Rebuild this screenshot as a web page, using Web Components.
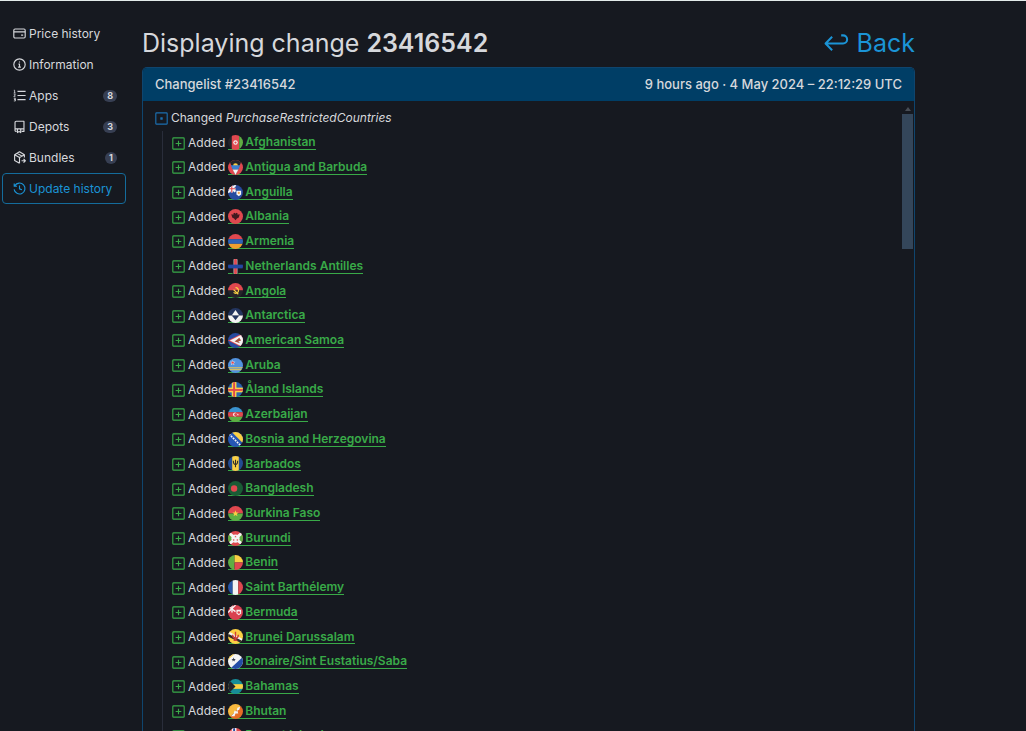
<!DOCTYPE html>
<html lang="en">
<head>
<meta charset="utf-8">
<title>Changelist #23416542</title>
<style>
  :root {
    --bg: #161920;
    --text: #d6d8dc;
    --blue: #1b94d6;
    --header: #003e66;
    --line: #0f456e;
    --green: #39aa48;
  }
  body {
    margin: 0;
    height: 100vh;
    overflow: hidden;
    background: var(--bg);
    color: var(--text);
    font-family: Inter, "Liberation Sans", sans-serif;
  }
</style>
</head>
<body>
<history-page>
  <side-nav slot="nav">
    <nav-item icon="card">Price history</nav-item>
    <nav-item icon="info">Information</nav-item>
    <nav-item icon="list" count="8">Apps</nav-item>
    <nav-item icon="depot" count="3">Depots</nav-item>
    <nav-item icon="bundle" count="1">Bundles</nav-item>
    <nav-item icon="history" active>Update history</nav-item>
  </side-nav>
  <page-title>Displaying change <b style="font-weight: 600">23416542</b></page-title>
  <change-panel>
    <span slot="title">Changelist #23416542</span>
    <span slot="time">9 hours ago · 4 May 2024 – 22:12:29 UTC</span>
    <change-group name="PurchaseRestrictedCountries"></change-group>
  </change-panel>
</history-page>

<script>
const ICONS = {
  card: '<rect x="1" y="2.5" width="14" height="11" rx="1.5"/><path d="M1 6h14M10 10h2.5"/>',
  info: '<circle cx="8" cy="8" r="7"/><path d="M6.7 7.5H8v3.7M6.3 11.3h3.4M8 4.4v1"/>',
  list: '<path d="M5.5 3h10M5.5 8h10M5.5 13h10"/><path d="M1 1.5h1v3.5M.8 5h2.4M1 7h2L1 9.5h2M1 11.5h2V13H1.5 3v1.7H1" stroke-width="1"/>',
  depot: '<path d="M4.5 14H3.500a1 1 0 0 1-1-1V3a1.500 1.500 0 0 1 1.500-1.500h9.500V14h-3M2.500 11h11"/><path d="M5.500 11v4.500L7.500 14l2 1.500V11"/>',
  bundle: '<path d="M8 15 2 11.600V4.500L8 1l6 3.500V8M2 4.500 8 8l6-3.500M8 8v7M5 2.800l6 3.500"/><path d="M10.500 12H15M13 9.800l2.200 2.200L13 14.200"/>',
  history: '<path d="M2.300 4.500A6.700 6.700 0 1 1 1.400 9M1.500 1.800v3.400h3.400M8 4.300v4.200l3 1"/>',
  back: '<path d="M5.200 3.700 1 8l4.200 4.300M1 8h11.200a2.600 2.600 0 0 0 2.600-2.600v0A2.600 2.600 0 0 0 12.200 2.800H11"/>',
  changed: '<rect x="1" y="1" width="14" height="14" rx="1"/><path d="M6.500 8h3M8 6.500v3" stroke-width="2.500"/>',
  added: '<rect x="1" y="1" width="14" height="14" rx="1"/><path d="M4.500 8h7M8 4.500v7"/>'
};

// round flags, 16x16 box
const R = '#e0484f', B = '#274b9f', W = '#f4f4f4', Y = '#fbd044', G = '#5fae43';
const rect = (x, y, w, h, c) => `<rect x="${x}" y="${y}" width="${w}" height="${h}" fill="${c}"/>`;
const poly = (pts, c) => `<polygon points="${pts}" fill="${c}"/>`;
const dot = (x, y, r, c) => `<circle cx="${x}" cy="${y}" r="${r}" fill="${c}"/>`;
const all = c => rect(0, 0, 16, 16, c);
const jack = `<path d="M0 1l8 6M8 0L0 8" stroke="${W}" stroke-width="2.4"/><path d="M4 0v8M0 4h8" stroke="${W}" stroke-width="2.4"/><path d="M4 0v8M0 4h8" stroke="${R}" stroke-width="1.2"/>`;
const star = (x, y, r, c) => {
  const pts = [];
  for (let i = 0; i < 10; i++) {
    const a = Math.PI * (i / 5 - 0.5), d = i % 2 ? r * 0.42 : r;
    pts.push((x + d * Math.cos(a)).toFixed(1) + ',' + (y + d * Math.sin(a)).toFixed(1));
  }
  return poly(pts.join(' '), c);
};

const FLAGS = {
  af: rect(0, 0, 4, 16, '#25242a') + rect(4, 0, 8, 16, R) + rect(12, 0, 4, 16, G) + dot(8, 8, 2.4, W) + dot(8, 8, 1.2, R),
  ag: all(R) + poly('1,0 15,0 8,16', '#25242a') + dot(8, 6, 2.6, Y) + poly('3,5.5 13,5.5 11,10 5,10', '#3d7fd0') + poly('5,10 11,10 8,16', W),
  ai: all(B) + jack + poly('9,6 14,6 14,10 11.5,12 9,10', W) + dot(11.5, 8.5, 1.2, '#f0a04b'),
  al: all(R) + '<path d="M8 5l1-1 1.500 1-.5 1 2.500-.5-1 3.500-2 1-1.500 2-1.500-2-2-1-1-3.500 2.500.5-.5-1L7 4z" fill="#42191f"/>',
  am: rect(0, 0, 16, 5.5, R) + rect(0, 5.5, 16, 5, '#2f62b5') + rect(0, 10.5, 16, 5.5, '#f0a02e'),
  an: all('#161920') + rect(6, 0, 4, 16, W) + rect(6.5, 0, 3, 16, R) + rect(0, 6, 16, 4, '#2447a0'),
  ao: rect(0, 0, 16, 8, R) + rect(0, 8, 16, 8, '#25242a') + '<path d="M8 5a3 3 0 1 1-2 5M6 7l5 5" fill="none" stroke="#fbd044" stroke-width="1.3"/>',
  aq: rect(0, 0, 16, 8, '#23355f') + rect(0, 8, 16, 8, W) + poly('8,2 12,8 4,8', W) + poly('4,8 12,8 8,13', '#23355f'),
  as: all(B) + poly('0,8 16,0 16,16', R) + poly('2,8 16,1 16,15', W) + poly('7,9 12,5 14,8 11,9 13,11', '#a9503c'),
  aw: all('#5292df') + rect(0, 10, 16, 1, Y) + rect(0, 12, 16, 1, Y) + star(5, 5, 3, W) + star(5, 5, 2, R),
  ax: all('#2a62ae') + rect(4, 0, 5, 16, Y) + rect(0, 6, 16, 5, Y) + rect(5.5, 0, 2, 16, R) + rect(0, 7.5, 16, 2, R),
  az: rect(0, 0, 16, 5.5, '#3b93d0') + rect(0, 5.5, 16, 5, R) + rect(0, 10.5, 16, 5.5, G) + dot(7.5, 8, 2.2, W) + dot(8.3, 8, 1.7, R) + star(10.5, 8, 1.3, W),
  ba: all('#2657b5') + poly('4,0 16,0 16,12', Y) + '<path d="M1 2l14 14" stroke="#f4f4f4" stroke-width="1.7" stroke-dasharray="2 1"/>',
  bb: all('#234b91') + rect(4.5, 0, 7, 16, Y) + '<path d="M8 4v8M5.700 5c0 3 .5 4 2.300 4s2.300-1 2.300-4" fill="none" stroke="#342f26" stroke-width="1.2"/>',
  bd: all('#1a5b35') + dot(6.5, 8, 3.4, R),
  bf: rect(0, 0, 16, 8, R) + rect(0, 8, 16, 8, G) + star(8, 8, 3.6, Y),
  bi: all(R) + rect(0, 4, 5, 8, G) + rect(11, 4, 5, 8, G) + '<path d="M1 2l14 12M15 2L1 14" stroke="#f4f4f4" stroke-width="3"/>' + dot(8, 8, 4.4, W) + star(8, 6, 1.3, R) + star(6, 9.5, 1.3, R) + star(10, 9.5, 1.3, R),
  bj: rect(0, 0, 7, 16, G) + rect(7, 0, 9, 8, Y) + rect(7, 8, 9, 8, R),
  bl: rect(0, 0, 5, 16, '#2856a8') + rect(5, 0, 6, 16, W) + rect(11, 0, 5, 16, R),
  bm: all('#d9414f') + '<path d="M0 1l8 6M8 0L0 8" stroke="#f4f4f4" stroke-width="1.5"/>' + rect(3.5, 0, 1.5, 8, W) + poly('9,5 14,5 14,9 11.5,11 9,9', W) + dot(11.5, 8, 1.4, R),
  bn: all(Y) + poly('0,2 16,11 16,14 0,6', W) + poly('0,5 16,13 16,16 0,8', '#302b29') + '<path d="M8 3v9M5 6c0 5 6 5 6 0M6 12h4" fill="none" stroke="#cf3f37" stroke-width="1.5"/>',
  bq: all(W) + poly('0,0 7,0 0,6', Y) + poly('16,3 16,16 2,16', '#244da5') + star(6, 6, 2.4, '#31374b'),
  bs: all('#178d98') + rect(0, 5.5, 16, 5, Y) + poly('0,0 8,8 0,16', '#25242a'),
  bt: poly('0,0 16,0 0,16', '#f8b83e') + poly('16,0 16,16 0,16', '#e66c25') + '<path d="M3 13l3-3 1-3 2 1 1-4 3-1-1 3-2 1 1 3-3 0-1 3z" fill="#f4f4f4"/>',
  bv: all(R) + rect(4, 0, 5, 16, W) + rect(0, 5.5, 16, 5, W) + rect(5.5, 0, 2, 16, B) + rect(0, 7, 16, 2, B)
};

const COUNTRIES = [
  ['af', 'Afghanistan'], ['ag', 'Antigua and Barbuda'], ['ai', 'Anguilla'],
  ['al', 'Albania'], ['am', 'Armenia'], ['an', 'Netherlands Antilles'],
  ['ao', 'Angola'], ['aq', 'Antarctica'], ['as', 'American Samoa'],
  ['aw', 'Aruba'], ['ax', 'Åland Islands'], ['az', 'Azerbaijan'],
  ['ba', 'Bosnia and Herzegovina'], ['bb', 'Barbados'], ['bd', 'Bangladesh'],
  ['bf', 'Burkina Faso'], ['bi', 'Burundi'], ['bj', 'Benin'],
  ['bl', 'Saint Barthélemy'], ['bm', 'Bermuda'], ['bn', 'Brunei Darussalam'],
  ['bq', 'Bonaire/Sint Eustatius/Saba'], ['bs', 'Bahamas'], ['bt', 'Bhutan'],
  ['bv', 'Bouvet Island']
];

class BaseElement extends HTMLElement {
  constructor() {
    super();
    this.attachShadow({ mode: 'open' });
  }

  connectedCallback() {
    const template = document.createElement('template');
    template.innerHTML = `<style>${this.getStyles()}</style>${this.getTemplate()}`;
    this.shadowRoot.replaceChildren(template.content.cloneNode(true));
  }
}

class UiIcon extends BaseElement {
  getTemplate() {
    return `<svg viewBox="0 0 16 16" aria-hidden="true">${ICONS[this.getAttribute('name')]}</svg>`;
  }

  getStyles() {
    return `
      :host { display: block; flex: none; width: 13px; height: 13px; }
      svg {
        display: block; width: 100%; height: 100%; overflow: visible;
        fill: none; stroke: currentColor; stroke-width: var(--stroke, 1.4);
        stroke-linejoin: round;
      }
    `;
  }
}

class CountryFlag extends BaseElement {
  getTemplate() {
    return `<svg viewBox="0 0 16 16" aria-hidden="true">${FLAGS[this.getAttribute('code')]}</svg>`;
  }

  getStyles() {
    return `
      :host { display: block; flex: none; width: 15px; height: 15px; }
      svg { display: block; width: 100%; height: 100%; border-radius: 50%; }
    `;
  }
}

class HistoryPage extends BaseElement {
  getTemplate() {
    return `<slot name="nav"></slot><main><slot></slot></main>`;
  }

  getStyles() {
    return `
      :host {
        display: flex; gap: 16px; height: 100%; box-sizing: border-box;
        border-top: 1px solid #e3ebea; padding: 0 111px 0 2px;
      }
      main { flex: 1; min-width: 0; display: flex; flex-direction: column; }
    `;
  }
}

class SideNav extends BaseElement {
  getTemplate() {
    return `<nav aria-label="Sections"><slot></slot></nav>`;
  }

  getStyles() {
    return `
      :host { display: block; flex: none; width: 124px; padding-top: 17px; }
      nav { display: flex; flex-direction: column; }
    `;
  }
}

class NavItem extends BaseElement {
  getTemplate() {
    const count = this.getAttribute('count');
    return `
      <a href="#" ${this.hasAttribute('active') ? 'aria-current="page"' : ''}>
        <ui-icon name="${this.getAttribute('icon')}"></ui-icon>
        <span class="label"><slot></slot></span>
        ${count ? `<span class="count">${count}</span>` : ''}
      </a>
    `;
  }

  getStyles() {
    return `
      :host { display: block; font-size: 12px; font-weight: 400; line-height: 15px; }
      a {
        display: flex; align-items: center; gap: 3px; padding: 7px 8px 7px 10px;
        border: 1px solid transparent; border-radius: 4px;
        color: inherit; text-decoration: none;
      }
      a[aria-current] { border-color: #146c9c; color: var(--blue); }
      .label { flex: 1; white-space: nowrap; }
      .count {
        padding: 0 4px; border-radius: 6px; background: #373f53;
        font-size: 9px; font-weight: 700; line-height: 12px;
      }
    `;
  }
}

class PageTitle extends BaseElement {
  getTemplate() {
    return `
      <h1><slot></slot></h1>
      <a href="#"><ui-icon name="back"></ui-icon>Back</a>
    `;
  }

  getStyles() {
    return `
      :host {
        display: flex; justify-content: space-between; align-items: center;
        padding: 26px 0 8px; font-size: 25px; line-height: 32px;
      }
      h1 { margin: 0; font-size: inherit; font-weight: 400; }
      a { display: flex; align-items: center; gap: 8px; color: var(--blue); text-decoration: none; }
      ui-icon { width: 25px; height: 25px; --stroke: 1.3; }
    `;
  }
}

class ChangePanel extends BaseElement {
  getTemplate() {
    return `
      <header><slot name="title"></slot><slot name="time"></slot></header>
      <div class="body">
        <div class="content"><slot></slot></div>
        <div class="rail" aria-hidden="true"><i class="arrow"></i><i class="thumb"></i></div>
      </div>
    `;
  }

  getStyles() {
    return `
      :host {
        flex: 1; min-height: 0; display: flex; flex-direction: column; overflow: hidden;
        border: 1px solid var(--line); border-bottom: 0; border-radius: 5px 5px 0 0;
      }
      header {
        display: flex; justify-content: space-between; padding: 7px 12px;
        background: var(--header); font-size: 13px; font-weight: 500; line-height: 19px;
      }
      .body { flex: 1; min-height: 0; display: flex; }
      .content { flex: 1; min-height: 0; padding: 5px 12px; }
      .rail {
        display: flex; flex-direction: column; align-items: center; gap: 3px;
        width: 11px; padding: 6px 1px 0 0;
      }
      .arrow {
        width: 0; height: 0; border: 3px solid transparent;
        border-top: 0; border-bottom: 4px solid #484d55;
      }
      .thumb { width: 11px; height: 135px; background: #34465a; }
    `;
  }
}

class ChangeGroup extends BaseElement {
  getTemplate() {
    return `
      <div class="head"><ui-icon name="changed"></ui-icon><span>Changed <em>${this.getAttribute('name')}</em></span></div>
      <ul>
        ${COUNTRIES.map(([code, name]) => `<li><added-country code="${code}">${name}</added-country></li>`).join('')}
      </ul>
    `;
  }

  getStyles() {
    return `
      :host { display: block; font-size: 12px; font-weight: 400; line-height: 2.06; }
      .head { display: flex; align-items: center; gap: 3px; }
      .head ui-icon { color: #1b6fb0; }
      ul { margin: 0 0 0 7px; padding: 0 0 0 9px; border-left: 1px solid #292d3a; list-style: none; }
    `;
  }
}

class AddedCountry extends BaseElement {
  getTemplate() {
    return `
      <ui-icon name="added"></ui-icon>
      <span>Added</span>
      <a href="#"><country-flag code="${this.getAttribute('code')}"></country-flag><slot></slot></a>
    `;
  }

  getStyles() {
    return `
      :host { display: flex; align-items: center; gap: 3px; }
      ui-icon { color: var(--green); }
      a {
        display: flex; align-items: center; gap: 2px; height: 13px;
        border-bottom: 1px solid var(--green); color: var(--green);
        font-weight: 600; text-decoration: none;
      }
    `;
  }
}

customElements.define('ui-icon', UiIcon);
customElements.define('country-flag', CountryFlag);
customElements.define('history-page', HistoryPage);
customElements.define('side-nav', SideNav);
customElements.define('nav-item', NavItem);
customElements.define('page-title', PageTitle);
customElements.define('change-panel', ChangePanel);
customElements.define('change-group', ChangeGroup);
customElements.define('added-country', AddedCountry);
</script>
</body>
</html>
